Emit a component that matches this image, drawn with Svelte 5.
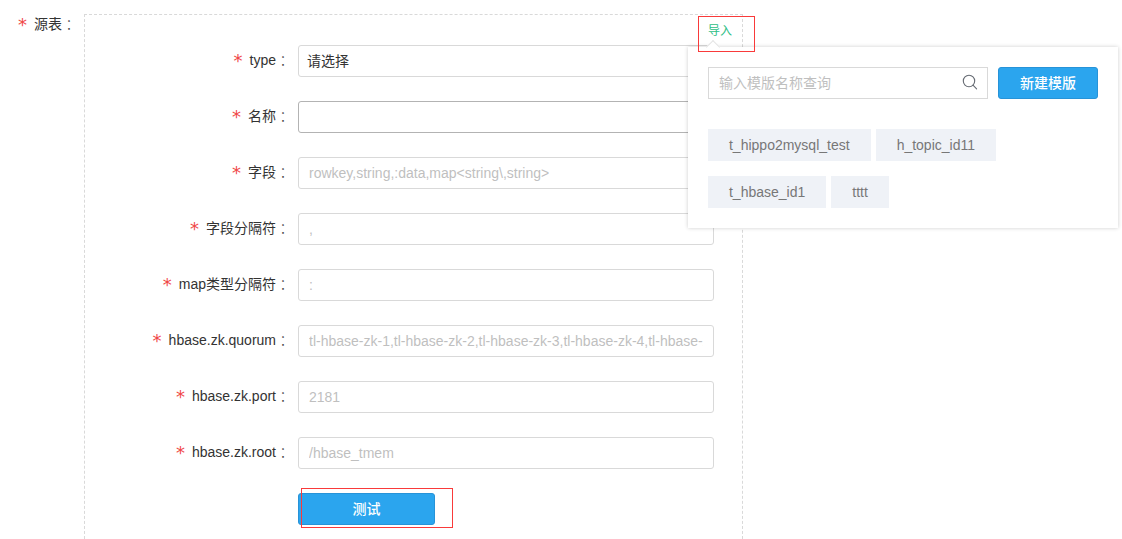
<script>
  const fields = [
    { id: 'name', label: '名称', hint: '', active: true },
    { id: 'columns', label: '字段', hint: 'rowkey,string,:data,map<string\\,string>' },
    { id: 'separator', label: '字段分隔符', hint: ',' },
    { id: 'map-separator', label: 'map类型分隔符', hint: ':' },
    {
      id: 'quorum',
      label: 'hbase.zk.quorum',
      hint: 'tl-hbase-zk-1,tl-hbase-zk-2,tl-hbase-zk-3,tl-hbase-zk-4,tl-hbase-zk-5'
    },
    { id: 'port', label: 'hbase.zk.port', hint: '2181' },
    { id: 'root', label: 'hbase.zk.root', hint: '/hbase_tmem' }
  ];
  const templates = ['t_hippo2mysql_test', 'h_topic_id11', 't_hbase_id1', 'tttt'];
</script>

{#snippet caption(text)}
  <span class="star">*</span>{text}<span class="colon">：</span>
{/snippet}

<main class="page">
  <div class="label source">{@render caption('源表')}</div>

  <section class="panel">
    <form class="form">
      <label class="label" for="type">{@render caption('type')}</label>
      <select id="type" class="control">
        <option>请选择</option>
      </select>

      {#each fields as f (f.id)}
        <label class="label" for={f.id}>{@render caption(f.label)}</label>
        <input id={f.id} class="control" class:active={f.active} type="text" placeholder={f.hint} />
      {/each}

      <div class="actions">
        <button type="button" class="primary test">测试</button>
        <span class="mark mark-test"></span>
      </div>
    </form>

    <div class="import">
      <a href="#import">导入</a>
      <div class="popover">
        <div class="search-row">
          <div class="search">
            <input type="text" aria-label="输入模版名称查询" placeholder="输入模版名称查询" />
            <svg width="16" height="18" viewBox="0 0 16 18" fill="none" stroke="#666b73" stroke-width="1.1">
              <circle cx="7" cy="7" r="5.7" />
              <path d="M11 11.2l3.6 3.6" stroke-linecap="round" />
            </svg>
          </div>
          <button type="button" class="primary create">新建模版</button>
        </div>
        <div class="tags">
          {#each templates as t}
            <button type="button" class="tag">{t}</button>
          {/each}
        </div>
      </div>
      <span class="mark mark-import"></span>
    </div>
  </section>
</main>

<style>
  :global(body) {
    margin: 0;
    background: #fff;
  }

  .page,
  .page * {
    box-sizing: border-box;
  }

  .page {
    display: grid;
    grid-template-columns: 84px minmax(0, 1fr);
    padding: 14px 379px 0 0;
    font: 14px/20px 'Liberation Sans', 'Noto Sans CJK SC', sans-serif;
    color: #333;
  }

  button,
  input,
  select {
    margin: 0;
    font: inherit;
    outline: none;
  }

  .label {
    padding-right: 8px;
    line-height: 30px;
    text-align: right;
    white-space: nowrap;
  }

  .source {
    line-height: 20px;
  }

  .star {
    margin-right: 7px;
    font: 18px/16px 'DejaVu Sans', sans-serif;
    color: #f04848;
    vertical-align: -2px;
  }

  .colon {
    font: 300 14px/16px 'Noto Sans CJK TC', sans-serif;
    color: #444;
    vertical-align: -1px;
  }

  .panel {
    position: relative;
    padding: 30px 28px 14px 0;
    border: 1px dashed #d9d9d9;
    border-bottom: 0;
  }

  .form {
    display: grid;
    grid-template-columns: 213px minmax(0, 1fr);
    grid-auto-rows: 32px;
    row-gap: 24px;
  }

  .control {
    width: 100%;
    height: 32px;
    padding: 0 10px;
    border: 1px solid #d9d9d9;
    border-radius: 3px;
    background: #fff;
    color: #333;
  }

  select.control {
    padding: 0 8px;
    appearance: none;
  }

  .control.active {
    border-color: #b3b3b3;
  }

  input::placeholder {
    color: #bfbfbf;
    opacity: 1;
  }

  .actions {
    position: relative;
    grid-column: 2;
  }

  .primary {
    height: 32px;
    padding: 0;
    border: 1px solid #2793d8;
    border-radius: 3px;
    background: #2ba5ee;
    color: #fff;
    font-weight: 500;
  }

  .test {
    width: 137px;
  }

  .mark {
    position: absolute;
    border: 1px solid #f93a3a;
    pointer-events: none;
  }

  .mark-test {
    top: -5px;
    left: 3px;
    width: 152px;
    height: 40px;
  }

  .import {
    position: absolute;
    top: 6px;
    right: 10px;
    font-size: 12px;
  }

  .import a {
    display: block;
    color: #2dbe85;
    text-decoration: none;
  }

  .mark-import {
    top: -5px;
    left: -10px;
    width: 57px;
    height: 36px;
  }

  .popover {
    position: absolute;
    top: 26px;
    left: -20px;
    width: 430px;
    padding: 20px;
    background: #fff;
    box-shadow: 0 0 4px rgba(0, 0, 0, 0.2);
    font-size: 14px;
  }

  .popover::before {
    content: '';
    position: absolute;
    top: -5px;
    left: 20px;
    width: 9px;
    height: 9px;
    border: 1px solid #e4e4e4;
    border-width: 1px 0 0 1px;
    background: #fff;
    transform: rotate(45deg);
  }

  .search-row {
    display: flex;
    gap: 10px;
  }

  .search {
    display: flex;
    flex: 1;
    align-items: center;
    height: 32px;
    padding: 0 9px 0 10px;
    border: 1px solid #d9d9d9;
  }

  .search input {
    flex: 1;
    min-width: 0;
    padding: 0;
    border: 0;
    background: none;
  }

  .create {
    width: 100px;
  }

  .tags {
    display: flex;
    flex-wrap: wrap;
    gap: 15px 5px;
    padding: 30px 60px 0 0;
  }

  .tag {
    height: 32px;
    padding: 0 21px;
    border: 0;
    background: #eff2f7;
    color: #777;
  }
</style>
